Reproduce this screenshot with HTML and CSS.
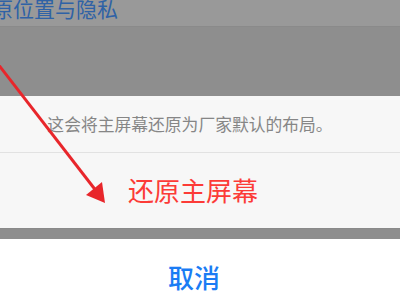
FILE: index.html
```html
<!DOCTYPE html>
<html lang="zh">
<head>
<meta charset="utf-8">
<link rel="stylesheet" href="styles.css">
</head>
<body>
<div class="screen">
  <div class="top-band"><span class="top-text">原位置与隐私</span></div>
  <div class="dim"></div>
  <div class="sheet">
    <div class="desc">这会将主屏幕还原为厂家默认的布局。</div>
    <div class="action">还原主屏幕</div>
  </div>
  <div class="gap"></div>
  <div class="cancel">取消</div>
  <svg class="arrow" width="400" height="300" viewBox="0 0 400 300">
    <line x1="-2" y1="64" x2="97" y2="192" stroke="#e8262b" stroke-width="3" stroke-linecap="round"/>
    <polygon points="105,203 86,195 102,182" fill="#e8262b"/>
  </svg>
</div>
</body>
</html>
```

FILE: styles.css
```css
* { box-sizing: border-box; }
html, body {
  margin: 0;
  padding: 0;
  width: 400px;
  height: 300px;
  overflow: hidden;
  background: #8e8e8e;
  font-family: "Noto Sans CJK SC", "Noto Sans", sans-serif;
}
.screen {
  position: relative;
  width: 400px;
  height: 300px;
  display: flex;
  flex-direction: column;
  overflow: hidden;
}
.top-band {
  height: 27px;
  flex: none;
  background: #999999;
  border-bottom: 1px solid #8a8a8a;
  position: relative;
  overflow: hidden;
}
.top-text {
  position: absolute;
  left: -8px;
  top: -7px;
  font-size: 21px;
  line-height: 30px;
  color: #2f62a6;
  white-space: nowrap;
}
.dim {
  height: 69px;
  flex: none;
  background: #8e8e8e;
}
.sheet {
  flex: none;
  background: #f7f7f7;
  padding-right: 14px;
}
.desc {
  height: 57px;
  display: flex;
  align-items: center;
  justify-content: center;
  font-size: 16.8px;
  color: #868686;
  border-bottom: 1px solid #e2e2e2;
  margin-right: -14px;
  padding-right: 20px;
  white-space: nowrap;
}
.action {
  height: 75px;
  display: flex;
  align-items: center;
  justify-content: center;
  font-size: 26px;
  color: #fc3b37;
  padding-bottom: 3px;
}
.gap {
  height: 11px;
  flex: none;
  background: #8e8e8e;
  border-top: 1px solid #8a8a8a;
}
.cancel {
  height: 75px;
  flex: none;
  background: #ffffff;
  display: flex;
  align-items: center;
  justify-content: center;
  padding-right: 12px;
  font-size: 26px;
  font-weight: 500;
  color: #1a7cf4;
}
.arrow {
  position: absolute;
  left: 0;
  top: 0;
  pointer-events: none;
}
```
